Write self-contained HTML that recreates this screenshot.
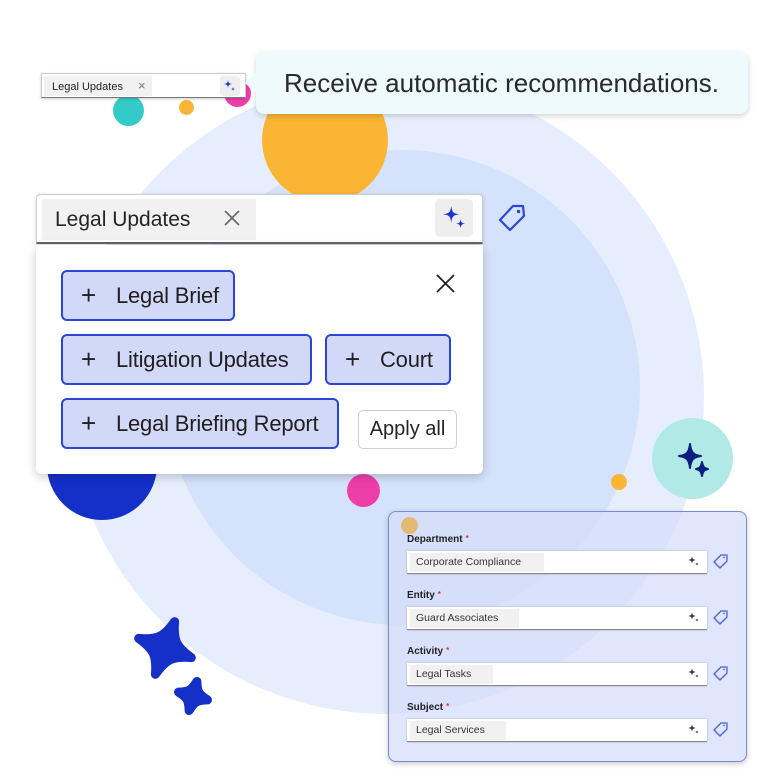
<!DOCTYPE html>
<html><head><meta charset="utf-8"><style>
*{box-sizing:border-box;margin:0;padding:0}
body{width:766px;height:780px;background:#fff;position:relative;overflow:hidden;font-family:"Liberation Sans",sans-serif;color:#242424}
.c{position:absolute;border-radius:50%}
.abs{position:absolute}
.chip{position:absolute;background:#d2d8f7;border:2px solid #2b46d6;border-radius:6px;font-size:22px;display:flex;align-items:center;padding-left:18px;color:#1f1f1f;white-space:nowrap;letter-spacing:-0.2px}
.chip b{font-weight:normal;font-size:26px;margin-right:20px}
.lbl{position:absolute;left:18px;font-size:10px;font-weight:bold;color:#222}
.lbl i{color:#d33;font-style:normal;font-size:8px;vertical-align:top;margin-left:3px}
.fld{position:absolute;left:18px;width:300px;height:23px;background:#fff;border-bottom:1.5px solid #888;box-shadow:0 0 2px rgba(0,0,0,.25)}
.fld span{position:absolute;left:3px;top:2px;height:19px;background:#f1f1f1;font-size:10.5px;line-height:19px;padding-left:6px;color:#333;white-space:nowrap}
</style></head><body>
<div class="c" style="left:68px;top:78px;width:636px;height:636px;background:#e6eefd"></div>
<div class="c" style="left:165px;top:150px;width:475px;height:475px;background:#d5e2fb"></div>
<div class="c" style="left:262px;top:77px;width:126px;height:126px;background:#fbb534"></div>
<div class="c" style="left:47px;top:410px;width:110px;height:110px;background:#1530c9"></div>
<div class="c" style="left:347px;top:474px;width:33px;height:33px;background:#ee3fa8"></div>
<div class="c" style="left:224px;top:80px;width:27px;height:27px;background:#ee3fa8"></div>
<div class="c" style="left:113px;top:95px;width:31px;height:31px;background:#33cbc8"></div>
<div class="c" style="left:179px;top:100px;width:15px;height:15px;background:#fbb534"></div>
<div class="c" style="left:611px;top:474px;width:16px;height:16px;background:#fbb534"></div>
<div class="c" style="left:652px;top:418px;width:81px;height:81px;background:#b0e9e6"></div>
<svg class="abs" style="left:652px;top:418px" width="81" height="81" viewBox="0 0 81 81">
<g fill="#0b1f80" stroke="#0b1f80" stroke-width="2" stroke-linejoin="round">
<path d="M38,26 C39,34 41,37 49,38 C41,39 39,42 38,50 C37,42 35,39 27,38 C35,37 37,34 38,26Z"/>
<path d="M50,44 C51,49 52,50 56,51 C52,52 51,53 50,58 C49,53 48,52 44,51 C48,50 49,49 50,44Z"/>
</g></svg>
<svg class="abs" style="left:120px;top:600px" width="110" height="125" viewBox="0 0 110 125">
<g fill="#1530c9" stroke="#1530c9" stroke-width="9" stroke-linejoin="round">
<path transform="translate(45,48) rotate(20)" d="M0,-28 C5,-10 10,-5 28,0 C10,5 5,10 0,28 C-5,10 -10,5 -28,0 C-10,-5 -5,-10 0,-28Z"/>
<path transform="translate(73,96) rotate(15)" d="M0,-15 C3,-5 5,-3 15,0 C5,3 3,5 0,15 C-3,5 -5,3 -15,0 C-5,-3 -3,-5 0,-15Z"/>
</g></svg>
<div class="abs" style="left:41px;top:73px;width:205px;height:25px;background:#fff;border:1px solid #ccc;border-bottom:1.5px solid #777;box-shadow:0 1px 3px rgba(0,0,0,.2)">
<div class="abs" style="left:2px;top:2px;width:108px;height:20px;background:#f1f1f1;font-size:11px;line-height:20px;padding-left:8px;white-space:nowrap">Legal Updates <span style="color:#777;margin-left:12px;font-size:13px">×</span></div>
<div class="abs" style="left:178px;top:2px;width:20px;height:20px;background:#eee;border-radius:3px"></div>
<svg class="abs" style="left:180px;top:4px" width="16" height="16" viewBox="0 0 16 16"><g fill="#1d37d0"><path d="M6,2 C6.5,5 7,5.5 10,6 C7,6.5 6.5,7 6,10 C5.5,7 5,6.5 2,6 C5,5.5 5.5,5 6,2Z"/><path d="M11,9 C11.3,10.6 11.5,10.8 13,11 C11.5,11.3 11.3,11.5 11,13 C10.7,11.5 10.5,11.3 9,11 C10.5,10.8 10.7,10.6 11,9Z"/></g></svg>
</div>
<div class="abs" style="left:256px;top:52px;width:492px;height:62px;background:#eefafb;border-radius:8px;box-shadow:0 2px 6px rgba(0,0,0,.18);font-size:26px;line-height:62px;padding-left:28px;color:#2a2a2a;white-space:nowrap">Receive automatic recommendations.</div>
<div class="abs" style="left:248px;top:76px;width:14px;height:14px;background:#eefafb;transform:rotate(45deg)"></div>
<div class="abs" style="left:36px;top:194px;width:447px;height:50px;background:#fff;border:1px solid #ccc;border-bottom:2px solid #666;border-radius:4px 4px 0 0;box-shadow:0 1px 4px rgba(0,0,0,.15)">
<div class="abs" style="left:5px;top:4px;width:214px;height:41px;background:#f1f1f1;font-size:21px;line-height:41px;padding-left:13px;white-space:nowrap">Legal Updates</div>
<svg class="abs" style="left:187px;top:15px" width="16" height="16"><path d="M1,1 L15,15 M15,1 L1,15" stroke="#666" stroke-width="1.6"/></svg>
<div class="abs" style="left:398px;top:4px;width:38px;height:38px;background:#eeeeee;border-radius:5px"></div>
<svg class="abs" style="left:403px;top:8px" width="30" height="30" viewBox="0 0 16 16"><g fill="#1d37d0"><path d="M6,1.5 C6.5,5 7,5.5 10.5,6 C7,6.5 6.5,7 6,10.5 C5.5,7 5,6.5 1.5,6 C5,5.5 5.5,5 6,1.5Z"/><path d="M11,8.5 C11.3,10.4 11.6,10.7 13.5,11 C11.6,11.3 11.3,11.6 11,13.5 C10.7,11.6 10.4,11.3 8.5,11 C10.4,10.7 10.7,10.4 11,8.5Z"/></g></svg>
</div>
<svg class="abs" style="left:497px;top:203px" width="30" height="30" viewBox="0 0 30 30"><path d="M16,3 L26,3 L27,13 L13,27 L3,17 Z" fill="none" stroke="#2b46d6" stroke-width="2.2" stroke-linejoin="round"/><circle cx="21.5" cy="8.5" r="1.7" fill="#2b46d6"/></svg>
<div class="abs" style="left:36px;top:245px;width:447px;height:229px;background:#fff;border-radius:0 0 6px 6px;box-shadow:0 3px 10px rgba(0,0,0,.2)"></div>
<svg class="abs" style="left:436px;top:274px" width="19" height="19"><path d="M1,1 L18,18 M18,1 L1,18" stroke="#222" stroke-width="1.8"/></svg>
<div class="chip" style="left:61px;top:270px;width:174px;height:51px"><b>+</b>Legal Brief</div>
<div class="chip" style="left:61px;top:334px;width:251px;height:51px"><b>+</b>Litigation Updates</div>
<div class="chip" style="left:325px;top:334px;width:126px;height:51px"><b>+</b>Court</div>
<div class="chip" style="left:61px;top:398px;width:278px;height:51px"><b>+</b>Legal Briefing Report</div>
<div class="abs" style="left:358px;top:410px;width:99px;height:39px;border:1px solid #d0d0d0;border-radius:5px;font-size:20px;line-height:37px;text-align:center;white-space:nowrap">Apply all</div>
<div class="abs" style="left:388px;top:511px;width:359px;height:251px;background:rgba(214,222,250,.75);border:1.5px solid #7788dd;border-radius:8px;box-shadow:0 2px 6px rgba(0,0,0,.2)">
<div class="c" style="left:12px;top:5px;width:17px;height:17px;background:#e5b873"></div>
<div class="lbl" style="top:22px">Department<i>*</i></div>
<div class="fld" style="top:39px"><span style="width:134px">Corporate Compliance</span></div>
<div class="lbl" style="top:78px">Entity<i>*</i></div>
<div class="fld" style="top:95px"><span style="width:109px">Guard Associates</span></div>
<div class="lbl" style="top:134px">Activity<i>*</i></div>
<div class="fld" style="top:151px"><span style="width:83px">Legal Tasks</span></div>
<div class="lbl" style="top:190px">Subject<i>*</i></div>
<div class="fld" style="top:207px"><span style="width:96px">Legal Services</span></div>
</div>
<svg class="abs" style="left:388px;top:511px" width="359" height="251">
<defs><g id="sp" fill="#333"><path d="M4,0 C4.4,3 4.8,3.4 8,4 C4.8,4.6 4.4,5 4,8 C3.6,5 3.2,4.6 0,4 C3.2,3.4 3.6,3 4,0Z"/><path d="M9,6 C9.2,7.5 9.4,7.7 11,8 C9.4,8.3 9.2,8.5 9,10 C8.8,8.5 8.6,8.3 7,8 C8.6,7.7 8.8,7.5 9,6Z"/></g>
<g id="tg"><path d="M7,1 L13,1 L13,7 L6,14 L0,8 Z" fill="none" stroke="#4c5fd6" stroke-width="1.3" stroke-linejoin="round" transform="translate(1,0)"/><circle cx="11" cy="3.5" r=".9" fill="#4c5fd6"/></g></defs>
<use href="#sp" x="300" y="45"/><use href="#sp" x="300" y="101"/><use href="#sp" x="300" y="157"/><use href="#sp" x="300" y="213"/>
<use href="#tg" x="325" y="43"/><use href="#tg" x="325" y="99"/><use href="#tg" x="325" y="155"/><use href="#tg" x="325" y="211"/>
</svg>
</body></html>
